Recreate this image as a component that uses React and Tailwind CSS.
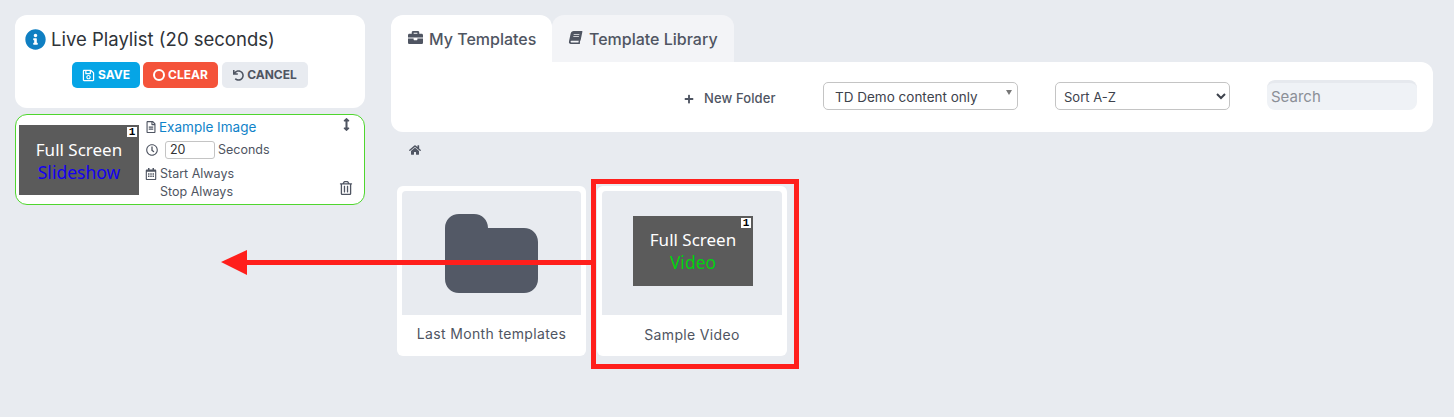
import React from "react";
import {
  FaInfoCircle,
  FaRegSave,
  FaUndo,
  FaRegFileAlt,
  FaRegClock,
  FaRegCalendarAlt,
  FaArrowsAltV,
  FaRegTrashAlt,
  FaBriefcase,
  FaBook,
  FaPlus,
  FaHome,
} from "react-icons/fa";

const font = "font-['Inter','Noto_Sans',sans-serif]";

const Thumb = ({ label, color, pad }) => (
  <div className={`relative w-[120px] h-[70px] bg-[#5b5b5b] flex flex-col items-center font-['Noto_Sans',sans-serif] shrink-0 ${pad}`}>
    <div className="absolute top-[2px] right-[2px] w-[10px] h-[10px] bg-white text-black text-[11px] leading-[10px] text-center font-bold font-['Liberation_Mono',monospace]">1</div>
    <div className="text-white text-[17px] leading-[20px]">Full Screen</div>
    <div className={`text-[17.5px] leading-[24px] ${color}`}>{label}</div>
  </div>
);

const PlaylistPanel = () => (
  <div className="w-[350px] shrink-0 flex flex-col gap-[6px]">
    <div className="h-[93px] bg-white rounded-xl pt-[12px] px-[10px]">
      <div className="flex items-center gap-[5px] text-[18.5px] leading-[24px] text-[#2f3338]">
        <FaInfoCircle className="text-[#0f7fc2] text-[21px]" />
        <span>Live Playlist (20 seconds)</span>
      </div>
      <div className="flex justify-center gap-[3px] mt-[11px] text-[12px] font-bold">
        <div className="h-[26px] w-[68px] rounded-[5px] bg-[#06a5e6] text-white flex items-center justify-center gap-[3px]">
          <FaRegSave className="text-[13px]" /> SAVE
        </div>
        <div className="h-[26px] w-[75px] rounded-[5px] bg-[#f4533a] text-white flex items-center justify-center gap-[3px]">
          <span className="w-[12px] h-[12px] rounded-full border-[2.5px] border-white" /> CLEAR
        </div>
        <div className="h-[26px] w-[86px] rounded-[5px] bg-[#e8ebf0] text-[#4f5562] flex items-center justify-center gap-[3px] ml-[1px]">
          <FaUndo className="text-[11px]" /> CANCEL
        </div>
      </div>
    </div>
    <div className="relative h-[91px] bg-white rounded-xl border border-[#4fd62e] pl-[3px] flex items-center gap-[6px] text-[12.5px] text-[#4f5562]">
      <Thumb label="Slideshow" color="text-[#1400f0]" pad="pt-[15px]" />
      <div className="flex flex-col self-start pt-[3px]">
        <div className="flex items-center gap-[2px] h-[18px]">
          <FaRegFileAlt className="text-[12px]" />
          <span className="text-[#0f83c9] text-[13.5px]">Example Image</span>
        </div>
        <div className="flex items-center h-[20px] mt-[4px]">
          <FaRegClock className="text-[12px] ml-[1px]" />
          <input
            readOnly
            value="20"
            className="w-[50px] h-[18px] ml-[7px] mr-[3px] border border-[#c4c4c4] rounded-[3px] px-[4px] text-[12.5px] text-[#333]"
          />
          <span>Seconds</span>
        </div>
        <div className="flex items-center gap-[3px] h-[18px] mt-[5px]">
          <FaRegCalendarAlt className="text-[12px]" />
          <span>Start Always</span>
        </div>
        <div className="pl-[15px] h-[18px] leading-[18px]">Stop Always</div>
      </div>
      <FaArrowsAltV className="absolute top-[3px] right-[11px] text-[13px] text-[#4f5562]" />
      <FaRegTrashAlt className="absolute bottom-[9px] right-[11px] text-[14px] text-[#4f5562]" />
    </div>
  </div>
);

const Tabs = () => (
  <div className="flex text-[16px] font-medium text-[#4f5562]">
    <div className="w-[161px] h-[47px] bg-white rounded-t-xl flex items-start pt-[12px] pl-[17px] gap-[6px]">
      <FaBriefcase className="text-[15px] mt-[3px]" />
      <span>My Templates</span>
    </div>
    <div className="w-[182px] h-[47px] bg-[#f3f4f7] rounded-t-xl flex items-start pt-[12px] pl-[17px] gap-[7px]">
      <FaBook className="text-[13px] mt-[4px] -skew-x-12" />
      <span>Template Library</span>
    </div>
  </div>
);

const Toolbar = () => (
  <div className="h-[70px] bg-white rounded-b-xl rounded-tr-xl flex items-center pb-[2px] text-[13px] text-[#4f5562]">
    <div className="flex items-center ml-[293px] w-[93px] mt-[5px] font-medium tracking-[0.1px]">
      <FaPlus className="text-[10px] mr-[10px]" />
      <span>New Folder</span>
    </div>
    <div className="relative ml-[46px] w-[195px] h-[28px] border border-[#c4c4c4] rounded-[5px] flex items-center pl-[11px] pt-[2px] text-[13.5px] text-[#3d424c]">
      TD Demo content only
      <span className="absolute right-[5px] top-[7px] w-0 h-0 border-l-[3px] border-r-[3px] border-t-[5px] border-l-transparent border-r-transparent border-t-[#777]" />
    </div>
    <select className="ml-[37px] w-[175px] h-[28px] border border-[#c4c4c4] rounded-[5px] pl-[4px] pt-[2px] bg-white text-[#3d424c]">
      <option>Sort A-Z</option>
    </select>
    <input
      readOnly
      placeholder="Search"
      className="ml-[37px] w-[150px] h-[30px] -mt-[3px] rounded-lg bg-[#eff2f6] border-t-[3px] border-[#e6e9ee] px-[4px] text-[15px] placeholder:text-[#8b8f97]"
    />
  </div>
);

const Card = ({ title, children, mt, inner, width }) => (
  <div className={`h-[170px] bg-white rounded-md p-[5px] ${width}`}>
    <div className={`h-[124px] bg-[#e8ebf0] rounded-t-sm flex items-center justify-center ${inner}`}>{children}</div>
    <div className={`text-center text-[14px] tracking-[0.35px] text-[#4f5562] ${mt}`}>{title}</div>
  </div>
);

const FolderIcon = () => (
  <svg width="93" height="79" viewBox="0 0 93 79" className="text-[#535966]">
    <path
      fill="currentColor"
      d="M0 14C0 6 6 0 14 0H29C37 0 43 6 43 14H79C87 14 93 20 93 28V65C93 73 87 79 79 79H14C6 79 0 73 0 65Z"
    />
  </svg>
);

const App = () => {
  return (
    <div className={`relative h-[417px] w-[1454px] overflow-hidden bg-[#e8ebf0] flex items-start gap-[26px] pl-[15px] pt-[15px] ${font}`}>
      <PlaylistPanel />
      <div className="w-[1042px]">
        <Tabs />
        <Toolbar />
        <FaHome className="ml-[18px] mt-[12px] text-[12px] text-[#4f5562]" />
        <div className="flex gap-[11px] ml-[6px] mt-[30px]">
          <Card title="Last Month templates" mt="mt-[8px]" width="w-[189px]">
            <FolderIcon />
          </Card>
          <Card title="Sample Video" mt="mt-[9px]" inner="pb-[4px] pl-[2px]" width="w-[190px]">
            <Thumb label="Video" color="text-[#00d20f]" pad="pt-[14px]" />
          </Card>
        </div>
      </div>

      {/* annotation drawn over the page */}
      <div className="absolute left-[591px] top-[179px] w-[208px] h-[190px] border-[5px] border-[#ff1f1c]" />
      <svg className="absolute left-[221px] top-[250px]" width="374" height="25" viewBox="0 0 374 25">
        <path d="M25 10H374V15H25Z" fill="#ff1f1c" />
        <path d="M0 12L26 0V25Z" fill="#ff1f1c" />
      </svg>
    </div>
  );
};

export default App;
